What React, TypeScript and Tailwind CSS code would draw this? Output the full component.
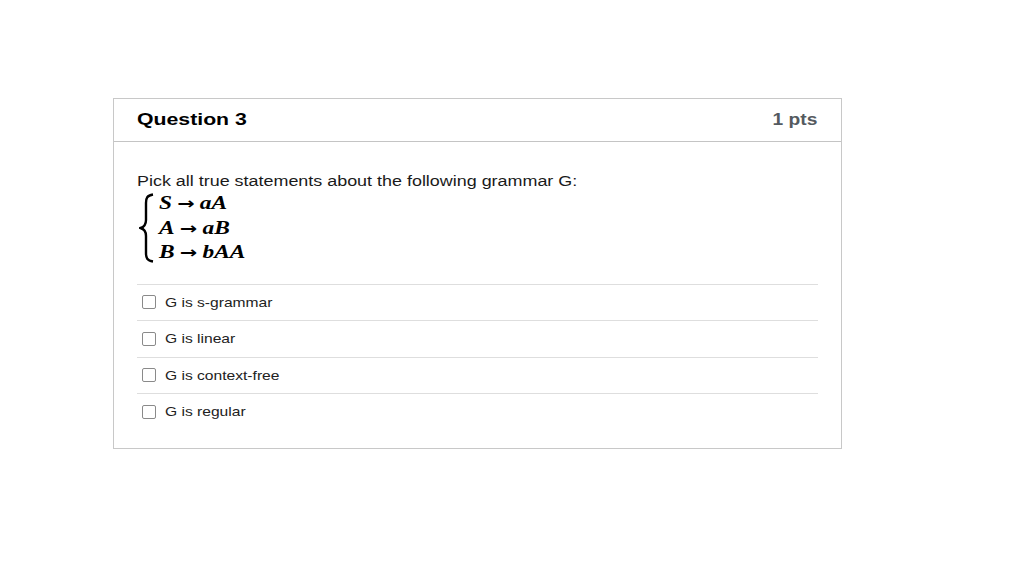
import React from "react";

const answers = ["G is s-grammar", "G is linear", "G is context-free", "G is regular"];

function Brace() {
  return (
    <svg width="16" height="70" viewBox="0 0 16 70" className="shrink-0">
      <path
        d="M14 1.5 C8 2.5 7 5 7 10 L7 27 C7 32 5 34 1.5 35 C5 36 7 38 7 43 L7 60 C7 65 8 67.5 14 68.5"
        fill="none"
        stroke="#000"
        strokeWidth="2.4"
      />
    </svg>
  );
}

function Rule({ l, r }: { l: string; r: string }) {
  return (
    <div className="h-[24.5px] flex items-center">
      <span
        className="inline-block origin-left scale-x-[1.3] text-[18px] text-black leading-none whitespace-nowrap"
        style={{ fontFamily: '"Liberation Serif", "DejaVu Serif", serif' }}
      >
        <span className="italic font-bold">{l}</span>
        <span className="font-bold mx-[4px] text-[16px]" style={{ fontFamily: '"DejaVu Sans", sans-serif' }}>→</span>
        <span className="italic font-bold">{r}</span>
      </span>
    </div>
  );
}

export default function App() {
  return (
    <div className="w-[1024px] h-[579px] bg-white pt-[98px] pl-[113px]" style={{ fontFamily: '"Liberation Sans", Arial, sans-serif' }}>
      <div className="w-[729px] h-[351px] border border-[#c8c8c8] flex flex-col">
        <div className="h-[43px] border-b border-[#c4c4c4] flex items-center justify-between pl-[23px] pr-[24px]">
          <span className="inline-block origin-left scale-x-[1.25] text-[17px] font-bold text-black">Question 3</span>
          <span className="inline-block origin-right scale-x-[1.2] text-[16px] font-bold text-[#555a60]">1 pts</span>
        </div>
        <div className="px-[23px] pt-[30px]">
          <div className="text-[14px] text-[#1a1a1a] leading-[18px]">
            <span className="inline-block origin-left scale-x-[1.28] whitespace-nowrap">Pick all true statements about the following grammar G:</span>
          </div>
          <div className="flex items-center mt-[1px] ml-[2px]">
            <Brace />
            <div className="ml-[4px] flex flex-col">
              <Rule l="S" r="aA" />
              <Rule l="A" r="aB" />
              <Rule l="B" r="bAA" />
            </div>
          </div>
          <div className="mt-[19px] w-[681px]">
            {answers.map((a) => (
              <div key={a} className="h-[36.5px] flex items-center border-t border-[#dedede]">
                <span className="ml-[5px] w-[14px] h-[14px] border border-[#8a8a8a] rounded-[2px] bg-white" />
                <span className="ml-[9px] inline-block origin-left scale-x-[1.2] text-[13px] text-[#222] whitespace-nowrap">{a}</span>
              </div>
            ))}
          </div>
        </div>
      </div>
    </div>
  );
}
